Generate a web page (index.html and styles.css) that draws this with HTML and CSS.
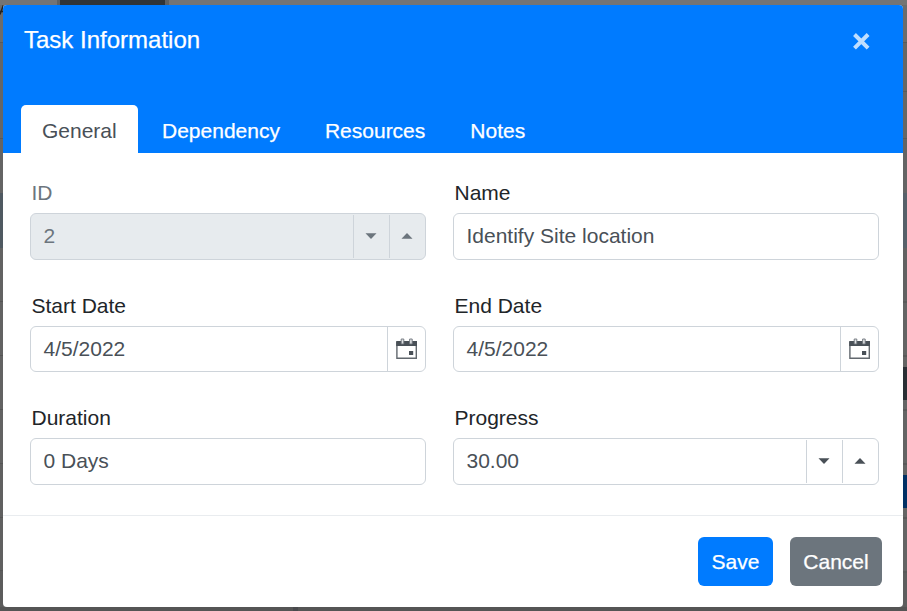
FILE: index.html
```html
<!DOCTYPE html>
<html lang="en">
<head>
<meta charset="utf-8">
<title>Task Information</title>
<link rel="stylesheet" href="styles.css">
</head>
<body>
<svg class="defs" width="0" height="0" aria-hidden="true">
  <symbol id="calendar" viewBox="0 0 22 22">
    <path d="M.9 4v16.2h19.4V4" fill="none" stroke="#62686e" stroke-width="1.4"/>
    <path d="M.2 3h20.8v5H.2z" fill="#495057"/>
    <path d="M5.2 1h2.6v5H5.2zM13.6 1h2.6v5h-2.6z" fill="#dfe1e3" stroke="#6e747a" stroke-width=".9"/>
    <path d="M13 13h4.2v4H13z" fill="#495057"/>
  </symbol>
  <symbol id="down" viewBox="0 0 12 6"><path d="M.5 .2h11L6 6z" fill="currentColor"/></symbol>
  <symbol id="up" viewBox="0 0 12 6"><path d="M.5 5.8h11L6 0z" fill="currentColor"/></symbol>
</svg>
<div class="backdrop">
  <div class="edge-top"><span class="toolbar-chip"></span></div>
  <div class="edge-left"><svg viewBox="0 0 3 12"><path d="M0 9.5L3.4 0M0 6.5h3" stroke="#222" stroke-width="1.4"/></svg></div>
  <main class="dialog">
    <header class="header">
      <div class="title-row">
        <h1 class="title">Task Information</h1>
        <svg class="close" viewBox="0 0 17 17"><path d="M1.5 1.5l13.6 13.6M15.1 1.5L1.5 15.1" stroke="#bfdeff" stroke-width="4"/></svg>
      </div>
      <nav class="tabs">
        <span class="tab active">General</span>
        <span class="tab">Dependency</span>
        <span class="tab">Resources</span>
        <span class="tab">Notes</span>
      </nav>
    </header>
    <section class="form">
      <div class="field disabled">
        <label>ID</label>
        <div class="control numeric"><span class="value">2</span><span class="spin"><svg><use href="#down"/></svg></span><span class="spin"><svg><use href="#up"/></svg></span></div>
      </div>
      <div class="field">
        <label>Name</label>
        <div class="control"><span class="value">Identify Site location</span></div>
      </div>
      <div class="field">
        <label>Start Date</label>
        <div class="control date"><span class="value">4/5/2022</span><span class="picker"><svg><use href="#calendar"/></svg></span></div>
      </div>
      <div class="field">
        <label>End Date</label>
        <div class="control date"><span class="value">4/5/2022</span><span class="picker"><svg><use href="#calendar"/></svg></span></div>
      </div>
      <div class="field">
        <label>Duration</label>
        <div class="control"><span class="value">0 Days</span></div>
      </div>
      <div class="field">
        <label>Progress</label>
        <div class="control numeric"><span class="value">30.00</span><span class="spin"><svg><use href="#down"/></svg></span><span class="spin"><svg><use href="#up"/></svg></span></div>
      </div>
    </section>
    <footer class="footer">
      <button class="btn save">Save</button>
      <button class="btn cancel">Cancel</button>
    </footer>
  </main>
  <div class="edge-right"></div>
  <div class="edge-bottom"></div>
</div>
</body>
</html>
```
FILE: styles.css
```css
* { box-sizing: border-box; }
body {
  margin: 0;
  overflow: hidden;
  font: 21px/30px "Liberation Sans", Arial, sans-serif;
  color: #212529;
}
.defs { display: none; }
.backdrop {
  display: grid;
  grid-template: 5px 602px 4px / 3px 900px 4px;
  height: 611px;
  background: #666;
}
.edge-top { grid-column: 1 / -1; background: #747474; padding-left: 57px; }
.toolbar-chip {
  display: block;
  width: 112px;
  height: 5px;
  background: #303437;
  border: solid #5d6062;
  border-width: 0 4px 0 3px;
}
.edge-left {
  background: linear-gradient(#6c6c6c 37px, #5a5a5a 37px 38px, #666 38px 133px, #585858 133px 134px, #646464 134px 188px, #4f5961 188px 243px, #626262 243px 296px, #555 296px 297px, #626262 297px 350px, #555 350px 351px, #626262 351px 404px, #555 404px 405px, #626262 405px 458px, #555 458px 459px, #606060 459px 512px, #555 512px 513px, #606060 513px 565px, #555 565px 566px, #5c5c5c 566px);
}
.edge-left svg { display: block; width: 3px; height: 12px; }
.edge-right {
  background: linear-gradient(#6c6c6c 37px, #5a5a5a 37px 38px, #666 38px 86px, #5a5a5a 86px 87px, #666 87px 133px, #5a5a5a 133px 134px, #646464 134px 188px, #57616a 188px 243px, #626262 243px 296px, #595959 296px 298px, #646464 298px 350px, #595959 350px 352px, #646464 352px 362px, #2a2f35 362px 395px, #646464 395px 404px, #595959 404px 406px, #646464 406px 458px, #595959 458px 460px, #646464 460px 470px, #003065 470px 503px, #646464 503px 512px, #595959 512px 514px, #646464 514px 566px, #595959 566px 568px, #5e5e5e 568px);
}
.edge-bottom {
  grid-column: 1 / -1;
  background: linear-gradient(90deg, #555 293px, #494a4d 293px 298px, #555 298px);
}
.dialog {
  display: flex;
  flex-direction: column;
  background: #fff;
  border-radius: 4px;
  overflow: hidden;
}
.header {
  display: flex;
  flex-direction: column;
  justify-content: space-between;
  height: 148px;
  padding: 20px 18px 0;
  background: #007bff;
  color: #fff;
  -webkit-text-stroke: .25px currentColor;
}
.title-row { display: flex; justify-content: space-between; padding: 0 15px 0 3px; }
.title { margin: 0; font-size: 24px; line-height: 30px; font-weight: 400; }
.close { width: 17px; height: 17px; margin-top: 8px; }
.tabs { display: flex; gap: 3px; }
.tab { height: 48px; padding: 0 21px; line-height: 51px; }
.tab.active { width: 117px; background: #fff; color: #495057; border-radius: 5px 5px 0 0; -webkit-text-stroke: 0; }
.form {
  display: grid;
  grid-template-columns: 396px 426px;
  grid-template-rows: 113px 112px 112px;
  column-gap: 27px;
  height: 362px;
  padding: 25px 24px 0 27px;
}
.field { display: flex; flex-direction: column; }
label { height: 35px; padding-left: 1.5px; line-height: 30px; }
.control {
  display: flex;
  height: 47px;
  border: 1px solid #ced4da;
  border-radius: 6px;
  color: #495057;
}
.date { height: 46px; }
.value { flex: 1; padding-left: 12.5px; line-height: 44px; }
.disabled { color: #6c757d; }
.disabled .control { color: #6c757d; background: #e7ebee; }
.spin, .picker { display: flex; align-items: center; justify-content: center; border-left: 1px solid #ced4da; }
.spin { width: 36px; margin: 1px 0; padding: 0 1px 1px 0; }
.spin svg { width: 12px; height: 6px; }
.picker { width: 38px; }
.picker svg { width: 22px; height: 22px; }
.footer {
  display: flex;
  justify-content: flex-end;
  align-items: flex-start;
  gap: 17px;
  flex: 1;
  padding: 21px 21px 0 0;
  border-top: 1px solid #e9ecef;
}
.btn {
  height: 49px;
  padding: 0;
  border: 0;
  border-radius: 6px;
  font: inherit;
  color: #fff;
  -webkit-text-stroke: .25px currentColor;
}
.save { width: 75px; background: #007bff; }
.cancel { width: 92px; background: #6c757d; }
```
